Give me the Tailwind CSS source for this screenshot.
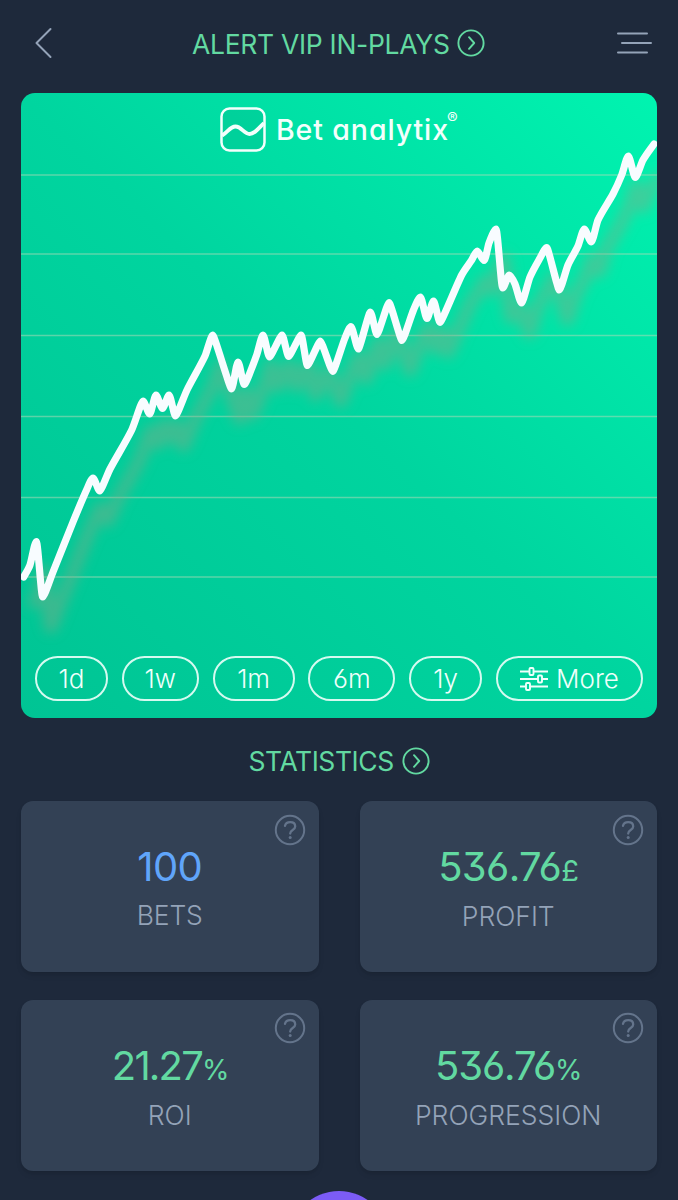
<!DOCTYPE html>
<html lang="en">
<head>
  <meta charset="UTF-8" />
  <meta name="viewport" content="width=device-width, initial-scale=1.0" />
  <title>Bet analytix</title>
  <script src="https://cdn.jsdelivr.net/npm/@tailwindcss/browser@4"></script>
</head>
<body class="bg-[#1e293b] font-['Inter',sans-serif] [font-feature-settings:'cv11','cv09','cv03']">
  <div class="relative w-[678px] h-[1200px] overflow-hidden">

    <!-- Header -->
    <header class="h-[93px] pl-[34px] pr-[26px] pb-[7px] flex items-center justify-between">
      <svg class="w-[18px] h-8" viewBox="0 0 18 32" fill="none" stroke="#94a3b8" stroke-width="2" stroke-linecap="round" stroke-linejoin="round"><path d="M16.500 2 2.500 16l14 14" /></svg>
      <h1 class="flex items-center gap-2 pl-[9px] text-[#62d9a1]">
        <span class="w-[257px] pt-px text-[26.5px] leading-8 whitespace-nowrap tracking-[-0.3px]">ALERT VIP IN-PLAYS</span>
        <svg class="w-7 h-7" viewBox="0 0 28 28" fill="none" stroke="currentColor" stroke-width="1.9" stroke-linecap="round" stroke-linejoin="round"><circle cx="14" cy="14" r="12.6" /><path d="m12 8.200 5.200 5.800-5.200 5.800" /></svg>
      </h1>
      <svg class="w-9 h-6" viewBox="0 0 36 24" stroke="#94a3b8" stroke-width="2" stroke-linecap="round"><path d="M2 2.500h29M6 12h29M2 21.500h29" /></svg>
    </header>

    <main class="px-[21px]">
      <!-- Chart -->
      <section class="relative h-[625px] rounded-[14px] overflow-hidden flex flex-col justify-between bg-linear-to-tr from-[#00c494] via-[#00d59f] to-[#00f4b0]">
        <svg class="absolute inset-0 w-[636px] h-[625px]" viewBox="21 93 636 625" fill="none">
          <defs>
            <filter id="blur" x="-10%" y="-10%" width="120%" height="120%"><feGaussianBlur stdDeviation="6" /></filter>
          </defs>
          <path d="M21 175h636M21 254h636M21 335.500h636M21 416.500h636M21 497.500h636M21 577h636" stroke="#b5d9b8" stroke-opacity=".5" stroke-width="1.7" />
          <path id="shadow" transform="translate(8 30)" stroke="#8fa585" stroke-opacity=".42" stroke-width="13" stroke-linejoin="round" filter="url(#blur)" />
          <path id="line" stroke="#f8fcff" stroke-width="7.2" stroke-linecap="round" stroke-linejoin="round" />
        </svg>

        <div class="relative pt-[14px] pl-[199px] flex items-start gap-[9px] text-[#f3fffc]">
          <svg class="w-[46px] h-[45px]" viewBox="0 0 46 45" fill="none" stroke="currentColor">
            <rect x="1.500" y="1.500" width="43" height="42" rx="8" fill="#00b98b" fill-opacity=".35" stroke-width="2.500" />
            <path d="M2 28.500C8 25 10 19.500 15.500 19.500c6 0 8.500 7.500 14 7.500 5 0 9-5.500 14.500-11" stroke-width="3.800" />
          </svg>
          <div class="flex pt-[7px]">
            <span class="w-[173px] pl-px text-[28.500px] leading-8 font-medium whitespace-nowrap tracking-[0.9px]">Bet analytix</span>
            <span class="text-[16px] leading-3 -mt-[2px] -ml-px">®</span>
          </div>
        </div>

        <!-- Period filters -->
        <div class="relative px-[14px] pb-[17px] flex justify-between text-[26px] font-light text-[#effffb]">
          <button class="w-[73px] h-[45px] rounded-full border-2 border-[#d5faf0]">1d</button>
          <button class="w-[77px] h-[45px] rounded-full border-2 border-[#d5faf0]">1w</button>
          <button class="w-[82px] h-[45px] rounded-full border-2 border-[#d5faf0]">1m</button>
          <button class="w-[87px] h-[45px] rounded-full border-2 border-[#d5faf0]">6m</button>
          <button class="w-[73px] h-[45px] rounded-full border-2 border-[#d5faf0]">1y</button>
          <button class="w-[147px] h-[45px] rounded-full border-2 border-[#d5faf0] flex items-center justify-center gap-2">
            <svg class="w-7 h-6" viewBox="0 0 28 24" fill="none" stroke="currentColor" stroke-width="1.9" stroke-linejoin="round">
              <path d="M0 4.500h9.500M13.500 4.500H28M0 12h18M22 12h6M0 19.500h6M10 19.500h18" />
              <rect x="9.500" y="1" width="4" height="7" rx="1" /><rect x="18" y="8.500" width="4" height="7" rx="1" /><rect x="6" y="16" width="4" height="7" rx="1" />
            </svg>
            <span>More</span>
          </button>
        </div>
      </section>

      <!-- Statistics -->
      <h2 class="h-[83px] pt-[2px] flex items-center justify-center gap-2 text-[#62d9a1]">
        <span class="w-[145px] text-[26.5px] leading-8 whitespace-nowrap tracking-[-0.45px]">STATISTICS</span>
        <svg class="w-7 h-7" viewBox="0 0 28 28" fill="none" stroke="currentColor" stroke-width="1.9" stroke-linecap="round" stroke-linejoin="round"><circle cx="14" cy="14" r="12.6" /><path d="m12 8.200 5.200 5.800-5.200 5.800" /></svg>
      </h2>

      <div class="grid grid-cols-2 gap-x-[41px] gap-y-7 text-center">
        <div class="relative h-[171px] pt-[41px] rounded-xl bg-[#334155] shadow-md">
          <svg class="absolute top-[13px] right-[13px] w-8 h-8" viewBox="0 0 32 32" fill="none" stroke="#64748b" stroke-width="2" stroke-linecap="round"><circle cx="16" cy="16" r="14.200" /><path d="M11 11.800c.6-2.400 2.500-3.600 5.200-3.600 3 0 5 1.600 5 4.200 0 3.800-5 3.400-5 7.100" stroke-width="2.300" /><path d="M16.200 23.500v.1" stroke-width="3" /></svg>
          <p class="h-[50px] text-[40px] leading-[50px] tracking-[-0.6px] text-[#60a5fa]">100</p>
          <p class="mt-[7px] text-[26.5px] leading-8 font-light tracking-[-0.2px] text-[#94a3b8]">BETS</p>
        </div>
        <div class="relative h-[171px] pt-[41px] rounded-xl bg-[#334155] shadow-md">
          <svg class="absolute top-[13px] right-[13px] w-8 h-8" viewBox="0 0 32 32" fill="none" stroke="#64748b" stroke-width="2" stroke-linecap="round"><circle cx="16" cy="16" r="14.200" /><path d="M11 11.800c.6-2.400 2.500-3.600 5.200-3.600 3 0 5 1.600 5 4.200 0 3.800-5 3.400-5 7.100" stroke-width="2.300" /><path d="M16.200 23.500v.1" stroke-width="3" /></svg>
          <p class="h-[50px] text-[40px] leading-[50px] tracking-[-0.6px] text-[#62d9a1]">536.76<span class="text-[29px]">£</span></p>
          <p class="mt-2 text-[26.5px] leading-8 font-light text-[#94a3b8]">PROFIT</p>
        </div>
        <div class="relative h-[171px] pt-[41px] rounded-xl bg-[#334155] shadow-md">
          <svg class="absolute top-[12px] right-[13px] w-8 h-8" viewBox="0 0 32 32" fill="none" stroke="#64748b" stroke-width="2" stroke-linecap="round"><circle cx="16" cy="16" r="14.200" /><path d="M11 11.800c.6-2.400 2.500-3.600 5.200-3.600 3 0 5 1.600 5 4.200 0 3.800-5 3.400-5 7.100" stroke-width="2.300" /><path d="M16.200 23.500v.1" stroke-width="3" /></svg>
          <p class="h-[50px] text-[40px] leading-[50px] tracking-[-1.8px] text-[#62d9a1]">21.27<span class="text-[28px]">%</span></p>
          <p class="mt-2 text-[26.5px] leading-8 font-light text-[#94a3b8]">ROI</p>
        </div>
        <div class="relative h-[171px] pt-[41px] rounded-xl bg-[#334155] shadow-md">
          <svg class="absolute top-[12px] right-[13px] w-8 h-8" viewBox="0 0 32 32" fill="none" stroke="#64748b" stroke-width="2" stroke-linecap="round"><circle cx="16" cy="16" r="14.200" /><path d="M11 11.800c.6-2.400 2.500-3.600 5.200-3.600 3 0 5 1.600 5 4.200 0 3.800-5 3.400-5 7.100" stroke-width="2.300" /><path d="M16.200 23.500v.1" stroke-width="3" /></svg>
          <p class="h-[50px] text-[40px] leading-[50px] tracking-[-1.1px] text-[#62d9a1]">536.76<span class="text-[28px]">%</span></p>
          <p class="mt-2 text-[26.5px] leading-8 font-light text-[#94a3b8]">PROGRESSION</p>
        </div>
      </div>
    </main>

    <!-- Floating button -->
    <div class="absolute left-[289px] top-[1191px] w-[100px] h-[100px] rounded-full bg-[#7c5cf6]"></div>
  </div>

  <script>
    const points = [
      [23.7,577],[30,565],[36.3,541.5],[42.7,597],[53,572],[73,522],[87,489],[93,478],[99.7,491],[110,469],[131.7,430],
      [143,401],[149.7,414],[156,395],[162.5,408.5],[169,395],[175.5,416],[187,390],[205,356],[212.7,335],
      [231.5,389],[238,362],[244.3,384.5],[256.7,355],[263,335],[269.5,357],[282,335],[288.7,356.5],[301,335],
      [307.5,365.5],[320.3,341],[332.7,371.5],[345,338],[351,326.5],[358.3,349],[370.3,312],[377,334.5],[389,302.5],
      [402,340.5],[413.5,310],[420.3,297],[427,318.5],[433.5,301],[440,322.5],[461.7,275],[471.7,260],[477.3,251],
      [484,260.5],[489,243],[496,229],[502.7,288],[509.3,275],[515,284],[521.5,303],[530,277],[540,258],[546.7,247.5],
      [559.3,290],[568,265],[578,246],[584.3,229],[591.3,242],[598,220],[613,194],[621.7,175],[628.3,156],
      [635.3,177.5],[643,160],[654,144]
    ];

    // Flat tangents on peaks and dips, average slope elsewhere
    function slopeAt(i) {
      const p = points[i], a = points[i - 1] || p, b = points[i + 1] || p;
      if (a !== p && b !== p && (p[1] - a[1]) * (b[1] - p[1]) <= 0) return 0;
      return (b[1] - a[1]) / (b[0] - a[0]);
    }

    let d = `M${points[0]}`;
    for (let i = 1; i < points.length; i++) {
      const a = points[i - 1], b = points[i];
      const sa = slopeAt(i - 1), sb = slopeAt(i);
      const w = b[0] - a[0];
      const ta = sa ? w / 4 : Math.min(w / 3, 1.6);
      const tb = sb ? w / 4 : Math.min(w / 3, 1.6);
      d += `C${a[0] + ta},${a[1] + sa * ta} ${b[0] - tb},${b[1] - sb * tb} ${b}`;
    }
    document.getElementById("line").setAttribute("d", d);
    document.getElementById("shadow").setAttribute("d", d);
  </script>
</body>
</html>
